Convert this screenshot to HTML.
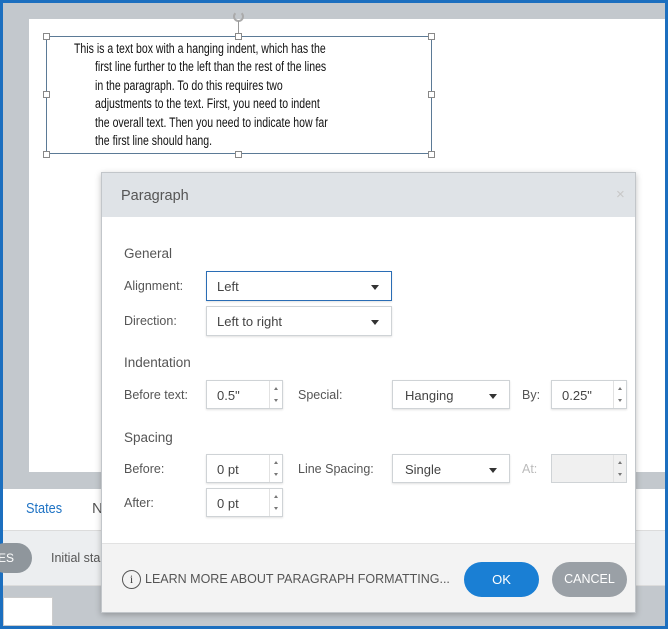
<!DOCTYPE html>
<html><head><style>
*{box-sizing:border-box;margin:0;padding:0}
body{width:668px;height:629px;overflow:hidden;background:#1c6fbf;font-family:"Liberation Sans",sans-serif;position:relative}
.a{position:absolute}
.lbl{font-size:12.5px;color:#555}
.h{font-size:13.5px;color:#555}
.box{position:absolute;background:#fff;border:1px solid #cfd3d6;box-shadow:0 1px 2px rgba(0,0,0,.12);font-size:13px;color:#444;padding-left:10px;line-height:29px}
.caret{position:absolute;right:12px;top:13px;width:0;height:0;border-left:4px solid transparent;border-right:4px solid transparent;border-top:5px solid #333}
.spin{position:absolute;right:0;top:0;width:13px;height:100%;border-left:1px solid #e2e2e2}
.spin:before{content:"";position:absolute;left:4px;top:6px;border-left:2px solid transparent;border-right:2px solid transparent;border-bottom:3px solid #777}
.spin:after{content:"";position:absolute;left:4px;bottom:6px;border-left:2px solid transparent;border-right:2px solid transparent;border-top:3px solid #777}
.hd{position:absolute;width:7px;height:7px;border:1px solid #888;background:#fff}
.tb{font-size:13.5px;color:#111;line-height:18.4px;white-space:nowrap;transform:scaleX(.78);transform-origin:left top}
</style></head><body>
<div class="a" style="left:3px;top:3px;width:662px;height:623px;background:#c3c8cd"></div>
<div class="a" style="left:29px;top:19px;width:636px;height:453px;background:#fff"></div>
<div class="a" style="left:3px;top:489px;width:662px;height:42px;background:#fff"></div>
<div class="a" style="left:3px;top:530px;width:662px;height:56px;background:#eceef0;border-top:1px solid #dcdcdc;border-bottom:1px solid #dcdcdc"></div>
<div class="a" style="left:3px;top:597px;width:50px;height:29px;background:#fff;border:1px solid #ccc"></div>
<div class="a" style="left:26px;top:500px;font-size:15px;color:#1f73c4;transform:scaleX(.85);transform-origin:left">States</div>
<div class="a" style="left:92px;top:500px;font-size:15px;color:#555">N</div>
<div class="a" style="left:-10px;top:543px;width:42px;height:30px;border-radius:15px;background:#8f969c;color:#fff;font-size:12px;line-height:30px;text-align:right;padding-right:18px">ES</div>
<div class="a" style="left:51px;top:551px;font-size:12.5px;color:#555">Initial sta</div>

<div class="a" style="left:46px;top:36px;width:386px;height:118px;border:1px solid #5b7a96"></div>
<div class="hd" style="left:43px;top:33px"></div><div class="hd" style="left:235px;top:33px"></div><div class="hd" style="left:428px;top:33px"></div>
<div class="hd" style="left:43px;top:91px"></div><div class="hd" style="left:428px;top:91px"></div>
<div class="hd" style="left:43px;top:151px"></div><div class="hd" style="left:235px;top:151px"></div><div class="hd" style="left:428px;top:151px"></div>
<div class="a" style="left:233px;top:11px;width:11px;height:11px;border:2px solid #aaa;border-radius:50%;border-top-color:transparent"></div>
<div class="a" style="left:238px;top:21px;width:1px;height:12px;background:#999"></div>
<div class="a" style="left:74px;top:40px">
<div class="tb">This is a text box with a hanging indent, which has the</div>
<div class="tb" style="margin-left:21px">first line further to the left than the rest of the lines</div>
<div class="tb" style="margin-left:21px">in the paragraph. To do this requires two</div>
<div class="tb" style="margin-left:21px">adjustments to the text. First, you need to indent</div>
<div class="tb" style="margin-left:21px">the overall text. Then you need to indicate how far</div>
<div class="tb" style="margin-left:21px">the first line should hang.</div>
</div>

<div class="a" style="left:101px;top:172px;width:535px;height:441px;background:#fff;border:1px solid #c2c6ca;box-shadow:0 2px 6px rgba(0,0,0,.25)">
<div class="a" style="left:0;top:0;width:533px;height:44px;background:#dfe3e7"></div>
<div class="a" style="left:19px;top:15px;font-size:14.5px;color:#555">Paragraph</div>
<div class="a" style="left:514px;top:13px;font-size:15px;color:#c8c8c8">×</div>
<div class="a" style="left:0;top:370px;width:533px;height:69px;background:#f3f3f3;border-top:1px solid #e2e2e2"></div>
</div>
<div class="a h" style="left:124px;top:246px">General</div>
<div class="a lbl" style="left:124px;top:279px">Alignment:</div>
<div class="box" style="left:206px;top:271px;width:186px;height:30px;border-color:#2a6db5">Left<span class="caret"></span></div>
<div class="a lbl" style="left:124px;top:314px">Direction:</div>
<div class="box" style="left:206px;top:306px;width:186px;height:30px">Left to right<span class="caret"></span></div>
<div class="a h" style="left:124px;top:355px">Indentation</div>
<div class="a lbl" style="left:124px;top:388px">Before text:</div>
<div class="box" style="left:206px;top:380px;width:77px;height:29px">0.5"<span class="spin"></span></div>
<div class="a lbl" style="left:298px;top:388px">Special:</div>
<div class="box" style="left:392px;top:380px;width:118px;height:29px;padding-left:12px">Hanging<span class="caret"></span></div>
<div class="a lbl" style="left:522px;top:388px">By:</div>
<div class="box" style="left:551px;top:380px;width:76px;height:29px">0.25"<span class="spin"></span></div>
<div class="a h" style="left:124px;top:430px">Spacing</div>
<div class="a lbl" style="left:124px;top:462px">Before:</div>
<div class="box" style="left:206px;top:454px;width:77px;height:29px">0 pt<span class="spin"></span></div>
<div class="a lbl" style="left:298px;top:462px">Line Spacing:</div>
<div class="box" style="left:392px;top:454px;width:118px;height:29px;padding-left:12px">Single<span class="caret"></span></div>
<div class="a lbl" style="left:522px;top:462px;color:#bbb">At:</div>
<div class="box" style="left:551px;top:454px;width:76px;height:29px;background:#f0f0f0;box-shadow:none">&nbsp;<span class="spin"></span></div>
<div class="a lbl" style="left:124px;top:496px">After:</div>
<div class="box" style="left:206px;top:488px;width:77px;height:29px">0 pt<span class="spin"></span></div>

<div class="a" style="left:122px;top:570px;width:19px;height:19px;border:1.5px solid #555;border-radius:50%;font-size:12px;text-align:center;line-height:16px;color:#444;font-family:'Liberation Serif',serif">i</div>
<div class="a" style="left:145px;top:572px;font-size:12.5px;color:#555;white-space:nowrap">LEARN MORE ABOUT PARAGRAPH FORMATTING...</div>
<div class="a" style="left:464px;top:562px;width:75px;height:35px;border-radius:18px;background:#1a7fd4;color:#fff;font-size:13px;text-align:center;line-height:35px">OK</div>
<div class="a" style="left:552px;top:562px;width:75px;height:35px;border-radius:18px;background:#9aa0a6;color:#fff;font-size:12.5px;text-align:center;line-height:35px">CANCEL</div>
</body></html>
